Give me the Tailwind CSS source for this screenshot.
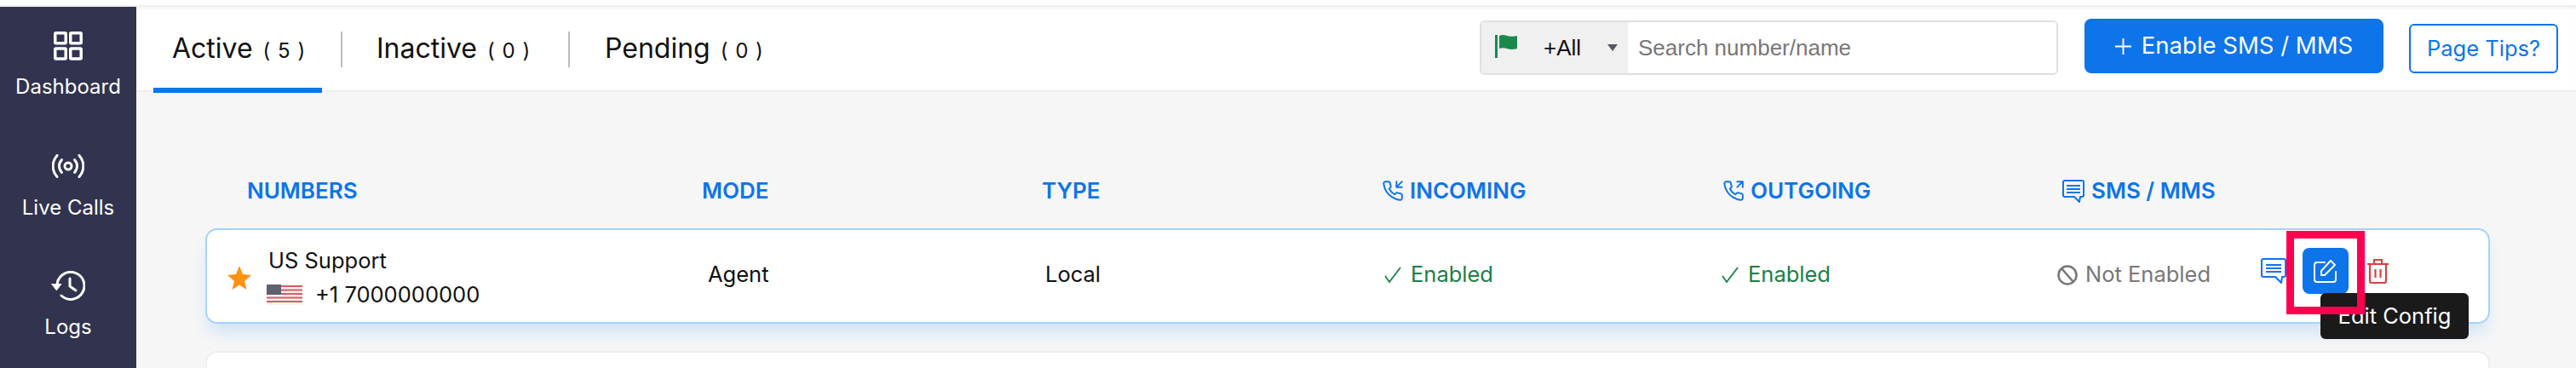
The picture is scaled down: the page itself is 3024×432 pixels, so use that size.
<!DOCTYPE html>
<html lang="en">
<head>
    <meta charset="UTF-8">
    <meta name="viewport" content="width=device-width, initial-scale=1.0">
    <title>Numbers</title>
    <script src="https://cdn.jsdelivr.net/npm/@tailwindcss/browser@4"></script>
</head>
<body class="bg-white font-['Inter',sans-serif] text-[#111]">
<div class="h-[432px] overflow-hidden pt-[6px]">
    <div class="flex h-[426px] bg-[#efefef] pt-[2px]">

        <!-- sidebar -->
        <nav class="w-[160px] shrink-0 bg-[#31334f] text-white text-[24px] leading-[30px] flex flex-col items-center">
            <svg class="mt-[29px] w-[34px] h-[34px]" viewBox="0 0 34 34" fill="none" stroke="#fff" stroke-width="3.5">
                <rect x="1.75" y="1.75" width="12.5" height="12" rx="1"/>
                <rect x="19.75" y="1.75" width="12.5" height="12" rx="1"/>
                <rect x="1.75" y="20" width="12.5" height="12" rx="1"/>
                <rect x="19.75" y="20" width="12.5" height="12" rx="1"/>
            </svg>
            <span class="mt-[16px]">Dashboard</span>
            <svg class="mt-[64px] w-[38px] h-[28px]" viewBox="0 0 38 28" fill="none" stroke="#fff" stroke-width="3" stroke-linecap="round">
                <circle cx="19" cy="14" r="4"/>
                <path d="M11.5 6.5c-4 4.5-4 10.500 0 15M26.500 6.500c4 4.500 4 10.500 0 15"/>
                <path d="M6 1.500c-6.500 7.500-6.500 17.500 0 25M32 1.500c6.500 7.500 6.500 17.500 0 25"/>
            </svg>
            <span class="mt-[20px]">Live Calls</span>
            <svg class="mt-[59px] w-[40px] h-[35px]" viewBox="0 0 40 35" fill="none" stroke="#fff" stroke-width="3" stroke-linecap="round" stroke-linejoin="round">
                <path d="M7 17.500a16 16 0 1 1 5 11.500"/>
                <path d="M1 15.500h11l-5.500 7z" fill="#fff" stroke-width="1"/>
                <path d="M22 9v9l7 5"/>
            </svg>
            <span class="mt-[16px]">Logs</span>
        </nav>

        <div class="flex-1 flex flex-col bg-[#f6f6f6] min-w-0">
            <!-- tabs + search -->
            <header class="h-[100px] shrink-0 bg-white border-b-2 border-[#eeeeee] flex items-start relative shadow-[inset_0_4px_4px_-2px_#f0f0f0]">
                <div class="relative h-[100px] w-[198px] ml-[20px] pl-[22px] pt-[29px] flex items-baseline">
                    <span class="text-[32px] leading-[40px]">Active</span>
                    <span class="ml-[12px] text-[24px] tracking-[1px]">( 5 )</span>
                    <div class="absolute left-0 right-0 top-[95px] h-[6px] bg-[#0d74ea]"></div>
                </div>
                <div class="ml-[22px] mt-[29px] w-[2px] h-[42px] bg-[#bdbdbd]"></div>
                <div class="ml-[40px] pt-[29px] flex items-baseline w-[225px]">
                    <span class="text-[32px] leading-[40px]">Inactive</span>
                    <span class="ml-[12px] text-[24px] tracking-[1px]">( 0 )</span>
                </div>
                <div class="w-[2px] mt-[29px] h-[42px] bg-[#bdbdbd]"></div>
                <div class="ml-[41px] pt-[29px] flex items-baseline w-[1027px]">
                    <span class="text-[32px] leading-[40px]">Pending</span>
                    <span class="ml-[12px] text-[24px] tracking-[1px]">( 0 )</span>
                </div>
                <div class="flex h-[64px] w-[679px] mt-[16px] border-2 border-[#e0e0e0] rounded-[6px] overflow-hidden font-['Liberation_Sans',sans-serif] text-[26px]">
                    <div class="w-[172px] shrink-0 bg-[#f0f0f0] flex items-center relative">
                        <svg class="absolute left-[16px] top-[15px] w-[26px] h-[27px]" viewBox="0 0 26 27" fill="#1a8a4c">
                            <rect x="0" y="0" width="3" height="27"/>
                            <path d="M5 1c3-1.500 6-1 9 0s6 1 12 0v15c-5 1.500-9 1-12 0s-6-1-9 0z"/>
                        </svg>
                        <span class="ml-[73px]">+All</span>
                        <svg class="absolute left-[148px] top-[26px] w-[12px] h-[8px]" viewBox="0 0 12 8" fill="#55565f"><path d="M0 0h12L6 8z"/></svg>
                    </div>
                    <input class="flex-1 min-w-0 pl-[12px] bg-white outline-none placeholder:text-[#777]" placeholder="Search number/name">
                </div>
                <button class="ml-[31px] mt-[14px] w-[351px] h-[64px] bg-[#0d74ea] rounded-[8px] text-white text-[27.500px] flex items-center justify-center">
                    <svg class="w-[19px] h-[19px] mr-[12px]" viewBox="0 0 20 20" stroke="#fff" stroke-width="2"><path d="M10 0v20M0 10h20"/></svg>
                    Enable SMS / MMS
                </button>
                <button class="ml-[30px] mt-[20px] w-[175px] h-[58px] border-2 border-[#0d74ea] rounded-[6px] text-[#0d74ea] text-[25.500px] bg-white">Page Tips?</button>
            </header>

            <!-- table -->
            <main class="flex-1 relative min-h-0">
                <div class="grid grid-cols-[534px_399px_399px_400px_399px_1fr] ml-[130px] mt-[101px] h-[30px] items-center text-[#0d74ea] text-[26px] font-semibold leading-[30px]">
                    <div>NUMBERS</div>
                    <div>MODE</div>
                    <div>TYPE</div>
                    <div class="flex items-center gap-[7px]">
                        <svg class="w-[26px] h-[26px]" viewBox="0 0 24 24" fill="none" stroke="currentColor" stroke-width="1.800" stroke-linecap="round" stroke-linejoin="round">
                            <path d="M22 16.920v3a2 2 0 0 1-2.180 2 19.790 19.790 0 0 1-8.630-3.070 19.500 19.500 0 0 1-6-6 19.790 19.790 0 0 1-3.070-8.670A2 2 0 0 1 4.110 2h3a2 2 0 0 1 2 1.720 12.840 12.840 0 0 0 .7 2.810 2 2 0 0 1-.45 2.110L8.090 9.910a16 16 0 0 0 6 6l1.270-1.270a2 2 0 0 1 2.110-.45 12.840 12.840 0 0 0 2.810.7A2 2 0 0 1 22 16.920z"/>
                            <path d="M16 2v6h6M22 2l-6 6"/>
                        </svg>
                        INCOMING
                    </div>
                    <div class="flex items-center gap-[7px]">
                        <svg class="w-[26px] h-[26px]" viewBox="0 0 24 24" fill="none" stroke="currentColor" stroke-width="1.800" stroke-linecap="round" stroke-linejoin="round">
                            <path d="M22 16.920v3a2 2 0 0 1-2.180 2 19.790 19.790 0 0 1-8.630-3.070 19.500 19.500 0 0 1-6-6 19.790 19.790 0 0 1-3.070-8.670A2 2 0 0 1 4.110 2h3a2 2 0 0 1 2 1.720 12.840 12.840 0 0 0 .7 2.810 2 2 0 0 1-.45 2.110L8.090 9.910a16 16 0 0 0 6 6l1.270-1.270a2 2 0 0 1 2.110-.45 12.840 12.840 0 0 0 2.810.7A2 2 0 0 1 22 16.920z"/>
                            <path d="M16 2h6v6M22 2l-6 6"/>
                        </svg>
                        OUTGOING
                    </div>
                    <div class="flex items-center gap-[8px]">
                        <svg class="w-[26px] h-[27px]" viewBox="0 0 26 27" fill="none" stroke="currentColor" stroke-width="2" stroke-linejoin="round">
                            <path d="M3 1h20a2 2 0 0 1 2 2v15a2 2 0 0 1-2 2h-2l-1 6-6-6H3a2 2 0 0 1-2-2V3a2 2 0 0 1 2-2z"/>
                            <path d="M5 7h16M5 11h16M5 15h16"/>
                        </svg>
                        SMS / MMS
                    </div>
                </div>

                <div class="ml-[81px] mr-[101px] mt-[29px] h-[112px] pb-[3px] bg-white border-2 border-[#a3d4ff] rounded-[14px] shadow-[0_14px_20px_-4px_#cfe3f7] grid grid-cols-[588px_396px_398px_396px_394px_1fr] items-center text-[25.500px]">
                    <div class="flex items-center pl-[24px] mt-[7px]">
                        <svg class="w-[28px] h-[28px]" viewBox="0 0 28 28" fill="#ff9010"><path d="M14 0l4 10 10 1-8 7 2.500 10L14 22.500 5.500 28 8 18l-8-7 10-1z"/></svg>
                        <div class="ml-[20px] leading-[30px]">
                            <div>US Support</div>
                            <div class="flex items-center mt-[10px]">
                                <svg class="w-[42px] h-[24px] -ml-[2px]" viewBox="0 0 42 24">
                                    <rect width="42" height="24" fill="#f4f4f4"/>
                                    <path d="M0 2h42M0 6.500h42M0 11h42M0 15.500h42M0 20h42" stroke="#e2575c" stroke-width="2.200"/>
                                    <rect width="17" height="12" fill="#5f6070"/>
                                </svg>
                                <span class="ml-[15px]">+1 7000000000</span>
                            </div>
                        </div>
                    </div>
                    <div>Agent</div>
                    <div>Local</div>
                    <div class="flex items-center text-[#1a7f46] gap-[11px]">
                        <svg class="w-[20px] h-[20px]" viewBox="0 0 20 20" fill="none" stroke="currentColor" stroke-width="1.800"><path d="M1 11l5 7L19 1"/></svg>
                        Enabled
                    </div>
                    <div class="flex items-center text-[#1a7f46] gap-[11px]">
                        <svg class="w-[20px] h-[20px]" viewBox="0 0 20 20" fill="none" stroke="currentColor" stroke-width="1.800"><path d="M1 11l5 7L19 1"/></svg>
                        Enabled
                    </div>
                    <div class="flex items-center text-[#777] gap-[9px]">
                        <svg class="w-[24px] h-[24px]" viewBox="0 0 24 24" fill="none" stroke="currentColor" stroke-width="2.500"><circle cx="12" cy="12" r="10.500"/><path d="M5 4l14 16"/></svg>
                        Not Enabled
                    </div>
                </div>

                <!-- tooltip, highlight and hovered action sit over the card -->
                <div class="absolute left-[2494px] top-[183px] flex items-center">
                    <svg class="w-[30px] h-[30px] text-[#0d74ea]" viewBox="0 0 30 30" fill="none" stroke="currentColor" stroke-width="2" stroke-linejoin="round">
                        <path d="M3 1h24a2 2 0 0 1 2 2v17a2 2 0 0 1-2 2h-2l-1 7-7-7H3a2 2 0 0 1-2-2V3a2 2 0 0 1 2-2z"/>
                        <path d="M6 8h18M6 12h18M6 16h18"/>
                    </svg>
                    <div class="ml-[19px] w-[54px] h-[54px] bg-[#0d74ea] rounded-[8px] flex items-center justify-center">
                        <svg class="w-[28px] h-[28px]" viewBox="0 0 28 28" fill="none" stroke="#fff" stroke-width="2" stroke-linejoin="round" stroke-linecap="round">
                            <path d="M13 4H4a3 3 0 0 0-3 3v17a3 3 0 0 0 3 3h19a3 3 0 0 0 3-3V15"/>
                            <path d="M9 19v-5L20 2l5 5-12 12z"/>
                        </svg>
                    </div>
                    <svg class="ml-[22px] w-[25px] h-[29px]" viewBox="0 0 25 29" fill="none" stroke="#d9413f" stroke-width="2.200" stroke-linejoin="round">
                        <path d="M0 6h25M8 6V1h9v5M3 6v20a2 2 0 0 0 2 2h15a2 2 0 0 0 2-2V6M9.500 12v10M15.500 12v10"/>
                    </svg>
                </div>
                <div class="absolute left-[2564px] top-[236px] w-[174px] h-[54px] bg-[#1a1a1a] rounded-[6px] text-white text-[25.500px] flex items-center justify-center">Edit Config</div>
                <div class="absolute left-[2524px] top-[163px] w-[92px] h-[98px] border-[9px] border-[#ff0050]"></div>

                <div class="ml-[81px] mr-[101px] mt-[32px] h-[60px] bg-white border-2 border-[#eeeeee] rounded-[14px]"></div>
            </main>
        </div>
    </div>
</div>
</body>
</html>
